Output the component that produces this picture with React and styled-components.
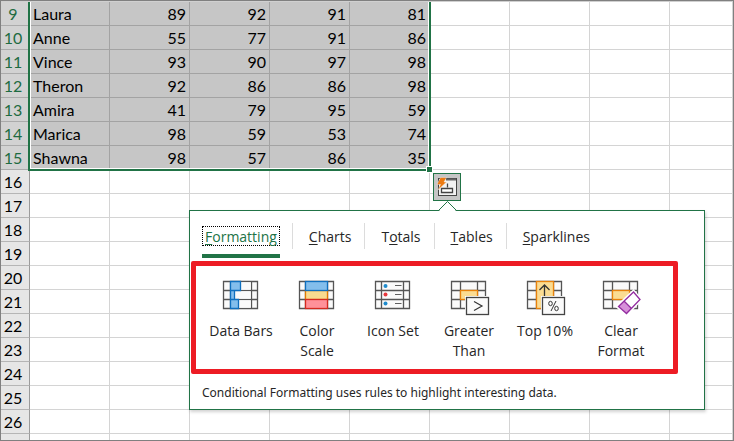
import React, { useState } from "react";
import styled, { createGlobalStyle } from "styled-components";

const GlobalStyle = createGlobalStyle`
  * {
    box-sizing: border-box;
  }

  body {
    margin: 0;
    background: #fff;
  }
`;

const Sheet = styled.main`
  position: relative;
  height: 100vh;
  overflow: hidden;
  border: 1px solid #808080;
  background: #fff;
`;

const Grid = styled.table`
  width: 100%;
  table-layout: fixed;
  border-collapse: separate;
  border-spacing: 0;
  border-top: 1px solid #d0d0d0;
  font-family: Lato, "Liberation Sans", sans-serif;
  font-size: 16px;
  line-height: 20px;
  color: #000;
`;

const HeaderCol = styled.col`
  width: 29px;
`;

const Col = styled.col`
  width: 80px;
`;

const RowHeader = styled.th`
  height: 24px;
  padding: 2px 4px 1px 0;
  border-right: 1px solid #9b9b9b;
  border-bottom: 1px solid ${({ $selected }) => ($selected ? "#ababab" : "#b5b5b5")};
  background: ${({ $selected }) => ($selected ? "#d2d2d2" : "#e6e6e6")};
  color: ${({ $selected }) => ($selected ? "#1e6b41" : "#000")};
  font-weight: 400;
  text-align: center;
`;

const Cell = styled.td`
  height: 24px;
  padding: 2px 3px 1px;
  border-right: 1px solid ${({ $selected }) => ($selected ? "#a3a3a3" : "#d4d4d4")};
  border-bottom: 1px solid ${({ $selected }) => ($selected ? "#a3a3a3" : "#d4d4d4")};
  background: ${({ $selected }) => ($selected ? "#c6c6c6" : "#fff")};
  text-align: ${({ $numeric }) => ($numeric ? "right" : "left")};
`;

const Selection = styled.div`
  position: absolute;
  top: 1px;
  left: 27px;
  width: 403px;
  height: 169px;
  border: 2px solid #217346;
  border-top: 0;
  box-shadow: inset 1px -1px 0 #fff, inset -1px 0 0 #fff;
  pointer-events: none;
`;

const FillHandle = styled.span`
  position: absolute;
  right: -4px;
  bottom: -4px;
  width: 7px;
  height: 7px;
  border: 1px solid #fff;
  background: #217346;
`;

const AnalysisButton = styled.button`
  position: absolute;
  top: 172px;
  left: 432px;
  display: grid;
  place-items: center;
  width: 28px;
  height: 28px;
  padding: 0;
  border: 1px solid #217346;
  background: #c6c6c6;
`;

const Popup = styled.section`
  position: absolute;
  top: 209px;
  left: 188px;
  width: 516px;
  border: 1px solid #217346;
  background: #fff;
  box-shadow: 1px 2px 3px rgba(0, 0, 0, 0.18);
  font-family: "Open Sans", "Noto Sans", sans-serif;
  color: #262626;
`;

const Caret = styled.svg`
  position: absolute;
  top: -10px;
  left: 248px;
  display: block;
`;

const Tabs = styled.div`
  display: flex;
  align-items: flex-start;
  padding: 12px 12px 0;
`;

const TabSlot = styled.div`
  display: flex;
  align-items: center;
  height: 26px;
  padding: ${({ $first }) => ($first ? "0 12px 0 0" : "0 13px 0 16px")};
  border-right: ${({ $last }) => ($last ? "0" : "1px solid #dcdcdc")};
`;

const Tab = styled.button`
  position: relative;
  height: 20px;
  padding: ${({ $active }) => ($active ? "1px 2px 0" : "2px 0 0")};
  border: ${({ $active }) => ($active ? "1px dotted #000" : "0")};
  background: none;
  color: ${({ $active }) => ($active ? "#217346" : "#262626")};
  font-family: inherit;
  font-size: 14px;
  line-height: 18px;

  &::after {
    content: "";
    display: ${({ $active }) => ($active ? "block" : "none")};
    position: absolute;
    left: -1px;
    right: -1px;
    top: 27px;
    height: 4px;
    background: #217346;
  }
`;

const Key = styled.span`
  text-decoration: underline;
  text-underline-offset: 2px;
`;

const Gallery = styled.div`
  display: grid;
  grid-template-columns: repeat(6, 1fr);
  margin: 12px 26px 0 1px;
  padding: 15px 14px 8px 7px;
  border: 5px solid #ed1c24;
  border-radius: 2px;
`;

const Option = styled.button`
  display: flex;
  flex-direction: column;
  align-items: center;
  gap: 12px;
  padding: 0 5px;
  border: 0;
  background: none;
  color: #262626;
  font-family: inherit;
  font-size: 14px;
  line-height: 20px;
`;

const OptionIcon = styled.svg`
  display: block;
  width: 36px;
  height: 28px;
  overflow: visible;
`;

const Hint = styled.p`
  margin: 0;
  padding: 9px 12px 7px;
  font-family: "Noto Sans", "Open Sans", sans-serif;
  font-size: 12px;
  line-height: 19px;
`;

const rows = [
  ["Laura", 89, 92, 91, 81],
  ["Anne", 55, 77, 91, 86],
  ["Vince", 93, 90, 97, 98],
  ["Theron", 92, 86, 86, 98],
  ["Amira", 41, 79, 95, 59],
  ["Marica", 98, 59, 53, 74],
  ["Shawna", 98, 57, 86, 35],
];

const FIRST_ROW = 9;
const LAST_ROW = 26;
const COLUMNS = 9;

const tabs = [
  { before: "", key: "F", after: "ormatting" },
  { before: "", key: "C", after: "harts" },
  { before: "T", key: "o", after: "tals" },
  { before: "", key: "T", after: "ables" },
  { before: "", key: "S", after: "parklines" },
];

const GridLines = ({ x1, x2 }) => (
  <>
    <rect x="0.5" y="0.5" width="34" height="27" fill="#fafafa" />
    <path
      d={`M0.5 0.5H34.5V27.5H0.5ZM0.5 9.5H34.5M0.5 18.5H34.5M${x1} 0.5V27.5M${x2} 0.5V27.5`}
      fill="none"
      stroke="#555"
      strokeWidth="1.3"
    />
  </>
);

const DataBarsIcon = () => (
  <OptionIcon viewBox="0 0 36 28">
    <GridLines x1={7.5} x2={28.5} />
    <path d="M8.5 1.2H27.8V8.8H8.5ZM8.5 10.2H27.8V17.8H8.5ZM8.5 19.2H27.8V26.8H8.5Z" fill="#fafafa" />
    <path
      d="M7.5 0.5H17.5V9.5H11.5V18.5H15.5V27.5H7.5ZM7.5 9.5H11.5M7.5 18.5H11.5"
      fill="#83beec"
      stroke="#0f6fbe"
      strokeWidth="1.3"
    />
  </OptionIcon>
);

const ColorScaleIcon = () => (
  <OptionIcon viewBox="0 0 36 28" strokeWidth="1.3">
    <GridLines x1={6.5} x2={28.5} />
    <rect x="6.5" y="9.5" width="22" height="9" fill="#f8db8f" stroke="#e07b00" />
    <rect x="6.5" y="0.5" width="22" height="9" fill="#83beec" stroke="#0f6fbe" />
    <rect x="6.5" y="18.5" width="22" height="9" fill="#ff9199" stroke="#d42a20" />
  </OptionIcon>
);

const IconSetIcon = () => (
  <OptionIcon viewBox="0 0 36 28">
    <GridLines x1={6.5} x2={28.5} />
    <circle cx="10.5" cy="5" r="2" fill="#1e8bcd" />
    <circle cx="10.5" cy="13.5" r="2" fill="#e8383d" />
    <circle cx="10.5" cy="22.5" r="2" fill="#1e8bcd" />
    <path d="M20 4.5H26.5M20 13.5H26.5M20 22.5H26.5" stroke="#5f5f5f" />
  </OptionIcon>
);

const Badge = () => (
  <>
    <rect x="14" y="15" width="25" height="20" fill="#fff" />
    <rect x="15.5" y="16.5" width="22" height="17" fill="#fafafa" stroke="#444" strokeWidth="1.3" />
  </>
);

const GreaterThanIcon = () => (
  <OptionIcon viewBox="0 0 36 28">
    <GridLines x1={9.5} x2={26.5} />
    <rect
      x="9.5"
      y="9.5"
      width="17"
      height="9"
      fill="#fbdc92"
      stroke="#e8820c"
      strokeWidth="1.3"
    />
    <Badge />
    <path d="M23 20.5L31 25L23 29.5" fill="none" stroke="#333" strokeWidth="1.2" />
  </OptionIcon>
);

const TopTenIcon = () => (
  <OptionIcon viewBox="0 0 36 28">
    <GridLines x1={9.5} x2={26.5} />
    <rect
      x="9.5"
      y="0.5"
      width="17"
      height="27"
      fill="#fbdc92"
      stroke="#e8820c"
      strokeWidth="1.3"
    />
    <path d="M17.5 16V4M12.5 9L17.5 4L22.5 9" fill="none" stroke="#333" strokeWidth="1.3" />
    <Badge />
    <g fill="none" stroke="#333">
      <ellipse cx="23.5" cy="22.5" rx="1.8" ry="2.2" />
      <ellipse cx="29.5" cy="27.5" rx="1.8" ry="2.2" />
      <path d="M29 20L24 30" />
    </g>
  </OptionIcon>
);

const ClearFormatIcon = () => (
  <OptionIcon viewBox="0 0 36 28">
    <GridLines x1={9.5} x2={26.5} />
    <rect
      x="9.5"
      y="9.5"
      width="17"
      height="9"
      fill="#fbdc92"
      stroke="#e8820c"
      strokeWidth="1.3"
    />
    <path d="M30.5 11L37 18.5L23.5 33L15 25.5Z" fill="#fff" stroke="#fff" strokeWidth="4" />
    <path d="M21 20L28.5 27.5L23.5 32.5L15.5 25.5Z" fill="#d68fd9" />
    <path
      d="M30.5 11L37 18.5L23.5 32.5L15.5 25.5ZM21 20L28.5 27.5"
      fill="none"
      stroke="#932da0"
      strokeWidth="1.3"
    />
  </OptionIcon>
);

const options = [
  { label: "Data Bars", icon: DataBarsIcon },
  { label: "Color Scale", icon: ColorScaleIcon },
  { label: "Icon Set", icon: IconSetIcon },
  { label: "Greater Than", icon: GreaterThanIcon },
  { label: "Top 10%", icon: TopTenIcon },
  { label: "Clear Format", icon: ClearFormatIcon },
];

const QuickAnalysisIcon = () => (
  <svg width="22" height="20" viewBox="0 0 22 20">
    <rect x="2.5" y="1.5" width="18" height="17" fill="#f2f2f2" stroke="#444" />
    <path d="M10 2.5H20" stroke="#666" strokeWidth="2" />
    <path d="M11.5 6.5V10.5" stroke="#444" strokeWidth="1.3" />
    <path d="M5.5 14.5V11.5H16.5V15.5H5.5Z" fill="#fff" stroke="#444" strokeWidth="1.3" />
    <path
      d="M4.5 0.5H10.5L8 5H10.5L2 13L4.5 7.5H1Z"
      fill="#ec7a12"
      stroke="#f2f2f2"
      strokeWidth="0.4"
    />
  </svg>
);

const Spreadsheet = () => {
  const numbers = [];
  for (let n = FIRST_ROW; n <= LAST_ROW; n++) numbers.push(n);
  // unnumbered row that runs off the bottom edge
  numbers.push(null);

  return (
    <Grid>
      <colgroup>
        <HeaderCol />
        {Array.from({ length: COLUMNS - 1 }, (_, i) => (
          <Col key={i} />
        ))}
        <col />
      </colgroup>
      <tbody>
        {numbers.map((number, index) => {
          const row = rows[index];
          return (
            <tr key={index}>
              <RowHeader scope="row" $selected={!!row}>
                {number}
              </RowHeader>
              {Array.from({ length: COLUMNS }, (_, i) => (
                <Cell key={i} $numeric={i > 0} $selected={!!row && i < row.length}>
                  {row ? row[i] : null}
                </Cell>
              ))}
            </tr>
          );
        })}
      </tbody>
    </Grid>
  );
};

const QuickAnalysis = () => {
  const [active, setActive] = useState(0);

  return (
    <Popup aria-label="Quick Analysis">
      <Caret width="20" height="11" viewBox="0 0 20 11">
        <path d="M0.5 10.5L9.5 1L18.5 10.5V11H0.5Z" fill="#fff" />
        <path d="M0.5 9.5L9.5 0.5L18.5 9.5" fill="none" stroke="#217346" />
      </Caret>
      <Tabs role="tablist">
        {tabs.map((tab, i) => (
          <TabSlot key={tab.after} $first={i === 0} $last={i === tabs.length - 1}>
            <Tab
              role="tab"
              aria-selected={active === i}
              $active={active === i}
              onClick={() => setActive(i)}
            >
              {tab.before}
              <Key>{tab.key}</Key>
              {tab.after}
            </Tab>
          </TabSlot>
        ))}
      </Tabs>
      <Gallery>
        {options.map(({ label, icon: Icon }) => (
          <Option key={label}>
            <Icon />
            <span>{label}</span>
          </Option>
        ))}
      </Gallery>
      <Hint>Conditional Formatting uses rules to highlight interesting data.</Hint>
    </Popup>
  );
};

const App = () => (
  <>
    <GlobalStyle />
    <Sheet>
      <Spreadsheet />
      <Selection>
        <FillHandle />
      </Selection>
      <AnalysisButton aria-label="Quick Analysis">
        <QuickAnalysisIcon />
      </AnalysisButton>
      <QuickAnalysis />
    </Sheet>
  </>
);

export default App;
